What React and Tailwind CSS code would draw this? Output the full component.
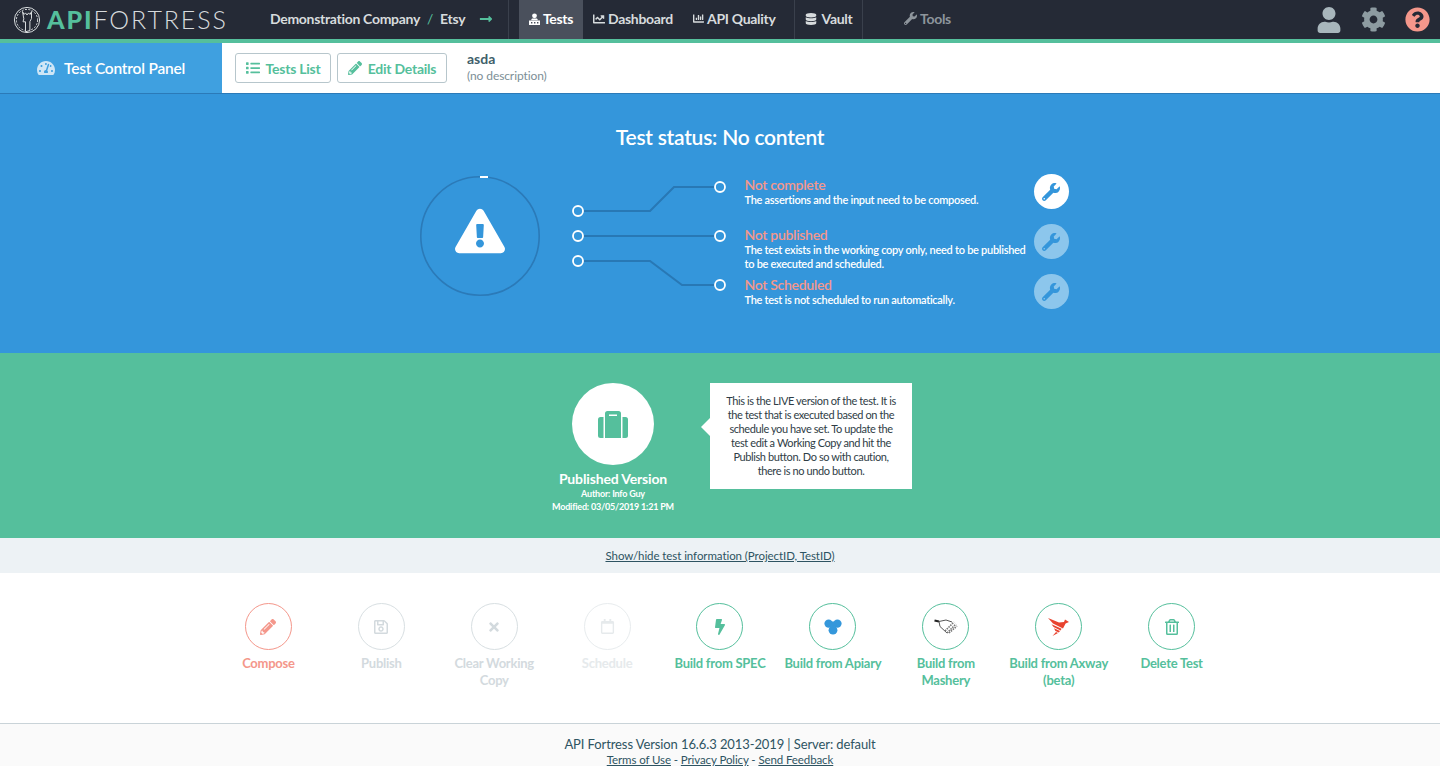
import React from "react";
import { FaTachometerAlt, FaList, FaPencilAlt, FaUser, FaCog, FaQuestionCircle, FaWrench, FaExclamationTriangle, FaRegSave, FaTimes, FaRegCalendar, FaBolt, FaRegTrashAlt, FaDatabase, FaChartLine, FaChartBar, FaLongArrowAltRight } from "react-icons/fa";

const TestsIcon = () => (
  <svg width="11" height="12" viewBox="0 0 11 12" fill="currentColor">
    <circle cx="5.5" cy="2.8" r="2.4" />
    <path d="M3 5.6h5l1 1.6H2z" />
    <path d="M0 7.4h11V12H0zM2 9v1.6h1.4V9zm3 0v1.6h1.4V9zm3 0v1.6h1.4V9z" fillRule="evenodd" />
  </svg>
);

const Logo = () => (
  <svg width="28" height="28" viewBox="0 0 28 28" fill="none" stroke="#d7dbdd" strokeWidth="1">
    <circle cx="14" cy="14" r="12.6" />
    <circle cx="14" cy="14" r="10.6" strokeDasharray="2 1.4" />
    <path d="M9.5 5.5l1.5 3 1.5-1.6L14 9l1.6-2.1L17 8.5l1.5-3v7l-1.6 3v9l-4.4 1.3v-10H10l.8-3z" fill="#252a36" />
  </svg>
);

const Briefcase = () => (
  <svg width="30" height="27" viewBox="0 0 30 27" fill="#55bf9c">
    <path d="M5.5 6H2.5A2.5 2.5 0 0 0 0 8.5v16A2.5 2.5 0 0 0 2.5 27h3z" />
    <path d="M24.5 6h3A2.5 2.5 0 0 1 30 8.500v16a2.500 2.500 0 0 1-2.500 2.500h-3z" />
    <path fillRule="evenodd" d="M9.500 0h11A2.500 2.500 0 0 1 23 2.500V27H7V2.500A2.500 2.500 0 0 1 9.500 0zM11 3.500v1.500h8V3.500z" />
  </svg>
);

const Apiary = () => (
  <svg width="18" height="16" viewBox="0 0 18 16" fill="#3497db">
    <circle cx="4.6" cy="4.6" r="4.2" />
    <circle cx="13.4" cy="4.6" r="4.2" />
    <circle cx="9" cy="11.2" r="4.4" />
    <rect x="6" y="2.5" width="6" height="5" />
  </svg>
);

const Mashery = () => (
  <svg width="24" height="16" viewBox="0 0 24 16" fill="none">
    <path d="M0.5 1.5L5 2.5" stroke="#222" strokeWidth="2.2" />
    <path d="M5 2.5L12 1L18 3M5 2.5L6 7.500L13 14" stroke="#555" strokeWidth="1" />
    <path d="M13 14L22 5M15 14L23 7M11 12L20 3" stroke="#777" strokeWidth="1.600" strokeDasharray="1.500 1" />
  </svg>
);

const Axway = () => (
  <svg width="21" height="18" viewBox="0 0 21 18" fill="#e8432f">
    <path d="M0 0L11 4.600L16 4L17 1.600L21 4L17.600 5.600L15 10.500L5 5.400z" />
    <path d="M3.500 6.200L13.600 10.800L12.600 12.400L5.600 9z" />
    <path d="M6 10.200L12 13L10.800 14.600L7.400 13z" />
    <path d="M8 14L10 15L4.500 18z" />
  </svg>
);

const Connectors = () => (
  <svg width="310" height="120" viewBox="0 0 310 120" fill="none" className="shrink-0">
    <circle cx="60" cy="60" r="59.200" stroke="#2b7ab8" strokeWidth="1.600" />
    <rect x="60" y="0" width="8" height="2" fill="#fff" />
    <g stroke="#2878b5" strokeWidth="2">
      <path d="M164 35H230L254 11H294" />
      <path d="M164 60H294" />
      <path d="M164 85H230L262 109H294" />
    </g>
    <g fill="#3496db" stroke="#fff" strokeWidth="1.800">
      <circle cx="158" cy="35" r="5" />
      <circle cx="158" cy="60" r="5" />
      <circle cx="158" cy="85" r="5" />
      <circle cx="300" cy="11" r="5" />
      <circle cx="300" cy="60" r="5" />
      <circle cx="300" cy="109" r="5" />
    </g>
  </svg>
);

const statuses = [
  { t: "Not complete", d: "The assertions and the input need to be composed.", on: true },
  { t: "Not published", d: "The test exists in the working copy only, need to be published to be executed and scheduled.", on: false },
  { t: "Not Scheduled", d: "The test is not scheduled to run automatically.", on: false },
];

const actions = [
  { l: "Compose", i: <FaPencilAlt size={16} />, c: "text-[#f4978b]", b: "border-[#f4978b]" },
  { l: "Publish", i: <FaRegSave size={16} />, c: "text-[#d3dade]", b: "border-[#d8dfe2]" },
  { l: "Clear Working Copy", i: <FaTimes size={14} />, c: "text-[#d3dade]", b: "border-[#d8dfe2]" },
  { l: "Schedule", i: <FaRegCalendar size={15} />, c: "text-[#e6eaec]", b: "border-[#e8ecee]" },
  { l: "Build from SPEC", i: <FaBolt size={16} />, c: "text-[#55bf9c]", b: "border-[#55bf9c]" },
  { l: "Build from Apiary", i: <Apiary />, c: "text-[#55bf9c]", b: "border-[#55bf9c]" },
  { l: "Build from Mashery", i: <Mashery />, c: "text-[#55bf9c]", b: "border-[#55bf9c]" },
  { l: "Build from Axway (beta)", i: <Axway />, c: "text-[#55bf9c]", b: "border-[#55bf9c]" },
  { l: "Delete Test", i: <FaRegTrashAlt size={16} />, c: "text-[#55bf9c]", b: "border-[#55bf9c]" },
];

export default function App() {
  return (
    <div className="w-full font-['Lato','Noto_Sans',sans-serif] bg-white">
      <header className="h-[43px] bg-[#252a36] border-b-4 border-[#55bf9c] flex items-stretch text-[14px] font-bold tracking-[-0.3px]">
        <div className="w-[270px] pl-[13px] flex items-center gap-[6px] shrink-0">
          <Logo />
          <span className="text-[25px] leading-none tracking-[1.9px] whitespace-nowrap">
            <span className="text-[#55bf9c] font-black">API</span>
            <span className="text-[#d7dbdd] font-light">FORTRESS</span>
          </span>
        </div>
        <div className="w-[239px] pb-[2px] flex items-center text-[#d7dbdd] whitespace-nowrap border-r border-[#3a404c]">
          <span>Demonstration Company</span>
          <span className="text-[#55bf9c] mx-[7px] font-normal">/</span>
          <span>Etsy</span>
          <FaLongArrowAltRight className="text-[#55bf9c] ml-[14px]" size={14} />
        </div>
        <div className="w-[10px]" />
        <div className="w-[64px] pb-[2px] bg-[#4a505c] text-white flex items-center justify-center gap-[3px]">
          <TestsIcon />
          <span>Tests</span>
        </div>
        <div className="w-[212px] pb-[2px] flex items-center pl-[10px] gap-[20px] text-[#d7dbdd] border-r border-[#3a404c] whitespace-nowrap">
          <span className="flex items-center gap-[3px]"><FaChartLine size={12} />Dashboard</span>
          <span className="flex items-center gap-[3px]"><FaChartBar size={11} />API Quality</span>
        </div>
        <div className="w-[68px] pb-[2px] flex items-center justify-center gap-[5px] text-[#d7dbdd] border-r border-[#3a404c]">
          <FaDatabase size={12} />Vault
        </div>
        <div className="pl-[41px] pb-[2px] flex items-center gap-[3px] text-[#8e959c]">
          <FaWrench size={13} />Tools
        </div>
        <div className="ml-auto pr-[10px] flex items-center gap-[19px]">
          <FaUser size={26} className="text-[#a8b6bc]" />
          <FaCog size={25} className="text-[#8d9ba1]" />
          <FaQuestionCircle size={25} className="text-[#f4978b]" />
        </div>
      </header>

      <div className="h-[51px] flex border-b border-[#2b7ab8]">
        <div className="w-[222px] bg-[#3fa0e0] text-white flex items-center pl-[37px] gap-[9px] text-[15.5px] font-semibold tracking-[-0.2px]">
          <FaTachometerAlt size={18} className="text-[#cfe6f6]" />
          <span className="mt-[1px]">Test Control Panel</span>
        </div>
        <div className="flex items-center pl-[13px] gap-[6px]">
          <div className="h-[30px] w-[96px] border border-[#b7c6cc] rounded-[3px] flex items-center justify-center gap-[6px] text-[#55bf9c] text-[14px] font-bold tracking-[-0.25px]">
            <FaList size={14} />Tests List
          </div>
          <div className="h-[30px] w-[110px] border border-[#b7c6cc] rounded-[3px] flex items-center justify-center gap-[6px] text-[#55bf9c] text-[14px] font-bold tracking-[-0.25px]">
            <FaPencilAlt size={14} />Edit Details
          </div>
          <div className="ml-[14px] flex flex-col -mt-[2px]">
            <span className="text-[14px] leading-[15px] mb-[2px] font-bold text-[#3f5f6b]">asda</span>
            <span className="text-[12px] leading-[16px] text-[#7d8f96] tracking-[-0.1px]">(no description)</span>
          </div>
        </div>
      </div>

      <section className="h-[259px] bg-[#3496db] text-white flex flex-col items-center">
        <h1 className="mt-[30px] h-[26px] text-[21px] leading-[26px] font-semibold tracking-[-0.25px]">Test status: No content</h1>
        <div className="mt-[26px] ml-[48px] flex">
          <div className="relative w-[310px] h-[120px]">
            <Connectors />
            <FaExclamationTriangle size={50} className="absolute left-[35px] top-[30px] text-white" />
          </div>
          <div className="ml-[15px] w-[324px] flex flex-col">
            {statuses.map((s) => (
              <div key={s.t} className="h-[50px] flex">
                <div className="w-[289px] shrink-0 mt-[1px]">
                  <div className="text-[14px] leading-[16px] text-[#f4978b] font-semibold tracking-[-0.3px]">{s.t}</div>
                  <div className="text-[11px] leading-[14px] font-semibold tracking-[-0.28px]">{s.d}</div>
                </div>
                <div className={`w-[35px] h-[35px] mt-[-2px] rounded-full flex items-center justify-center text-[#3496db] ${s.on ? "bg-white" : "bg-[#8cc6ec]"}`}>
                  <FaWrench size={18} />
                </div>
              </div>
            ))}
          </div>
        </div>
      </section>

      <section className="h-[185px] bg-[#55bf9c] flex justify-center pt-[30px] pl-[20px]">
        <div className="w-[130px] flex flex-col items-center text-white text-center">
          <div className="w-[82px] h-[82px] rounded-full bg-white flex items-center justify-center">
            <Briefcase />
          </div>
          <div className="mt-[5px] text-[14px] leading-[17px] font-bold whitespace-nowrap tracking-[-0.15px]">Published Version</div>
          <div className="text-[9px] leading-[13px] font-bold whitespace-nowrap tracking-[-0.2px]">Author: Info Guy</div>
          <div className="text-[9px] leading-[13px] font-bold whitespace-nowrap tracking-[-0.2px]">Modified: 03/05/2019 1:21 PM</div>
        </div>
        <div className="relative ml-[32px] w-[202px] h-[106px] bg-white px-[12px] pt-[11px] text-center text-[11px] leading-[14px] tracking-[-0.4px] text-[#2f3d46]">
          <span className="absolute -left-[9px] top-[35px] w-0 h-0 border-y-[9px] border-y-transparent border-r-[9px] border-r-white" />
          This is the LIVE version of the test. It is the test that is executed based on the schedule you have set. To update the test edit a Working Copy and hit the Publish button. Do so with caution, there is no undo button.
        </div>
      </section>

      <div className="h-[35px] bg-[#edf2f5] flex items-center justify-center text-[11.5px] tracking-[-0.07px] text-[#2e5462] underline">
        Show/hide test information (ProjectID, TestID)
      </div>

      <section className="h-[150px] pt-[30px] flex justify-center">
        <div className="grid grid-cols-9 w-[1016px] h-fit">
          {actions.map((a) => (
            <div key={a.l} className={`flex flex-col items-center text-center ${a.c}`}>
              <div className={`w-[47px] h-[47px] rounded-full border ${a.b} flex items-center justify-center`}>
                {a.i}
              </div>
              <div className="mt-[5px] px-[5px] text-[13px] leading-[17px] font-bold tracking-[-0.25px]">{a.l}</div>
            </div>
          ))}
        </div>
      </section>

      <footer className="h-[43px] border-t border-[#c9d3d8] bg-[#fafafa] text-center overflow-hidden">
        <div className="mt-[12px] text-[13px] leading-[16px] text-[#2e5462] tracking-[-0.1px]">API Fortress Version 16.6.3 2013-2019 | Server: default</div>
        <div className="text-[11.5px] leading-[16px] text-[#2e5462] tracking-[-0.1px]">
          <span className="underline">Terms of Use</span> - <span className="underline">Privacy Policy</span> - <span className="underline">Send Feedback</span>
        </div>
      </footer>
    </div>
  );
}
